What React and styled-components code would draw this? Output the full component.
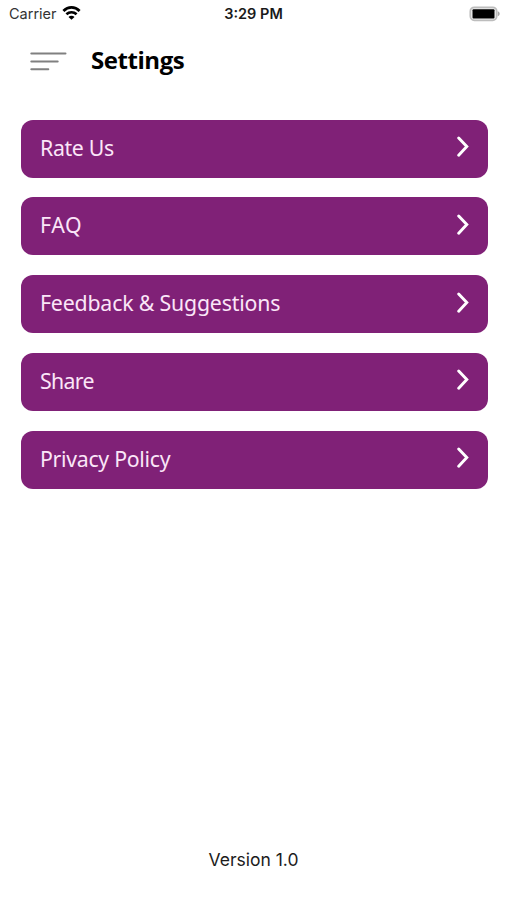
import React from "react";
import { styled, createGlobalStyle } from "styled-components";

const items = [
  { label: "Rate Us", spacing: "-0.35px" },
  { label: "FAQ", spacing: "0.6px" },
  { label: "Feedback & Suggestions", spacing: "-0.18px" },
  { label: "Share", spacing: "-0.65px" },
  { label: "Privacy Policy", spacing: "-0.3px" },
];

function WifiIcon() {
  return (
    <svg width="20" height="15" viewBox="0 0 20 15" fill="none">
      <path d="M1.4 4.9C6.1 0.3 12.9 0.3 17.6 4.9" stroke="#000" strokeWidth="2.8" />
      <path d="M4.4 8.3C7.3 5.5 11.7 5.5 14.6 8.3" stroke="#000" strokeWidth="2.6" />
      <path d="M9.5 13.8L6.5 10.9C8.1 9.3 10.9 9.3 12.5 10.9Z" fill="#000" />
    </svg>
  );
}

function BatteryIcon() {
  return (
    <svg width="32" height="16" viewBox="0 0 32 16">
      <rect x="1.3" y="1.3" width="26.4" height="13" rx="4" fill="#eee" stroke="#bdbdbd" strokeWidth="1.7" />
      <rect x="3.5" y="3.3" width="22" height="9.2" rx="1" fill="#000" />
      <path d="M28.8 5.2C31.3 6.2 31.3 9.2 28.8 10.2Z" fill="#a8a8a8" />
    </svg>
  );
}

function MenuIcon() {
  return (
    <svg width="38" height="22" viewBox="0 0 38 22" stroke="#808080" strokeWidth="2" strokeLinecap="round">
      <path d="M2.3 3.5H36.5M2.3 11.5H28.7M2.3 19.3H19.3" />
    </svg>
  );
}

function ChevronIcon() {
  return (
    <svg width="14" height="22" viewBox="0 0 14 22" fill="none">
      <path d="M2.7 2L10.8 10.6L2.7 19.2" stroke="#fff" strokeWidth="2.9" strokeLinecap="round" />
    </svg>
  );
}

function App() {
  return (
    <Screen>
      <GlobalStyle />
      <StatusBar>
        <Carrier>
          Carrier
          <WifiIcon />
        </Carrier>
        <Clock>3:29 PM</Clock>
        <Battery>
          <BatteryIcon />
        </Battery>
      </StatusBar>
      <Header>
        <MenuIcon />
        <Title>Settings</Title>
      </Header>
      <List>
        {items.map((item) => (
          <Row key={item.label}>
            <RowLabel $spacing={item.spacing}>{item.label}</RowLabel>
            <ChevronIcon />
          </Row>
        ))}
      </List>
      <Version>Version 1.0</Version>
    </Screen>
  );
}

export default App;

const GlobalStyle = createGlobalStyle`
  body {
    margin: 0;
    background: #fff;
  }

  svg {
    display: block;
    flex-shrink: 0;
  }
`;

const Screen = styled.div`
  width: 100%;
  height: 900px;
  display: flex;
  flex-direction: column;
  background: #fff;
  box-sizing: border-box;
  font-family: "Noto Sans", "Open Sans", sans-serif;
`;

const StatusBar = styled.div`
  height: 27px;
  display: grid;
  grid-template-columns: 1fr auto 1fr;
  align-items: center;
  padding: 0 6px 0 9px;
  font-family: Inter, sans-serif;
`;

const Carrier = styled.div`
  display: flex;
  align-items: center;
  gap: 5px;
  font-size: 14.5px;
  color: #333;
`;

const Clock = styled.div`
  margin-right: 3px;
  font-size: 14.5px;
  font-weight: 600;
  color: #1a1a1a;
`;

const Battery = styled.div`
  justify-self: end;
`;

const Header = styled.div`
  height: 68px;
  display: flex;
  align-items: center;
  gap: 24px;
  padding-left: 29px;
`;

const Title = styled.h1`
  margin: 0;
  padding-bottom: 2px;
  font-family: "Open Sans", "Noto Sans", sans-serif;
  font-size: 24px;
  line-height: 32px;
  font-weight: 700;
  letter-spacing: -0.45px;
  color: #000;
`;

const List = styled.div`
  display: flex;
  flex-direction: column;
  gap: 19.75px;
  padding: 24.5px 19.5px 0 20.5px;
`;

const Row = styled.div`
  height: 58px;
  display: flex;
  align-items: center;
  justify-content: space-between;
  padding: 0 18px 3px 19.5px;
  box-sizing: border-box;
  border-radius: 12px;
  background: #802177;
`;

const RowLabel = styled.span`
  padding-top: 1px;
  font-size: 21.3px;
  line-height: 30px;
  letter-spacing: ${(props) => props.$spacing};
  color: #fbe6f8;
`;

const Version = styled.div`
  margin-top: auto;
  padding-bottom: 28px;
  text-align: center;
  font-family: Inter, sans-serif;
  font-size: 17.5px;
  line-height: 24px;
  color: #1c1c1c;
`;
